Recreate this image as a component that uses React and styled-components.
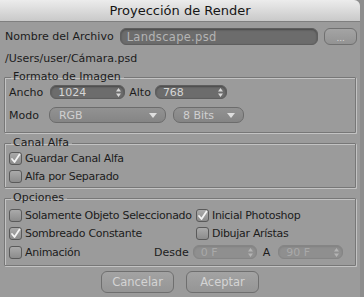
import React from "react";
import styled, { createGlobalStyle } from "styled-components";

const Global = createGlobalStyle`
  html, body { margin: 0; padding: 0; background: #8e8e8e; }
  body { font-family: "DejaVu Sans", "Liberation Sans", sans-serif; }
`;

const Window = styled.div`
  width: 360px;
  height: 297px;
  background: #9b9b9b;
  border-top-right-radius: 6px;
  overflow: hidden;
  font-size: 11px;
  color: #1c1c1c;
`;

const TitleBar = styled.div`
  height: 22px;
  background: linear-gradient(#ececec, #c9c9c9);
  border-bottom: 1px solid #7f7f7f;
  display: flex;
  align-items: center;
  justify-content: center;
  font-size: 13px;
  color: #151515;
  box-sizing: border-box;
`;

const Body = styled.div`
  padding: 6px 3px 0 5px;
`;

const Row = styled.div`
  display: flex;
  align-items: center;
  gap: ${p => p.gap ?? 4}px;
  height: ${p => p.h || 17}px;
`;

const Label = styled.span`
  white-space: nowrap;
  flex: none;
  margin-left: ${p => p.ml || 0}px;
  margin-right: ${p => p.mr || 0}px;
`;

const TextField = styled.div`
  width: ${p => p.w}px;
  height: 17px;
  box-sizing: border-box;
  border-radius: 6px;
  background: #6c6c6c;
  border: 1px solid #5e5e5e;
  box-shadow: inset 0 1px 2px rgba(0,0,0,0.35);
  color: #b4b4b4;
  padding-left: 6px;
  display: flex;
  align-items: center;
  font-size: 11.5px;
  letter-spacing: 0.3px;
`;

const DotsButton = styled.div`
  width: 33px;
  height: 17px;
  box-sizing: border-box;
  border-radius: 6px;
  border: 1px solid #707070;
  background: linear-gradient(#a4a4a4, #939393);
  color: #d8d8d8;
  display: flex;
  align-items: flex-end;
  justify-content: center;
  font-size: 9px;
  line-height: 11px;
  margin-left: auto;
`;

const PathLine = styled.div`
  height: 14px;
  margin-top: 6px;
  display: flex;
  align-items: center;
`;

const Group = styled.fieldset`
  margin: ${p => p.mt || 0}px 0 0 -1px;
  padding: ${p => p.pt || 0}px 4px ${p => p.pb || 3}px 4px;
  width: 352px;
  box-sizing: border-box;
  border: 1px solid #777;
  box-shadow: 1px 1px 0 #c3c3c3, inset 1px 1px 0 #c3c3c3;
  border-radius: 1px;
`;

const Legend = styled.legend`
  padding: 0 3px 0 2px;
  margin-left: 2px;
  font-size: 11px;
  line-height: 12px;
`;

const NumberField = styled.div`
  width: ${p => p.w}px;
  flex: none;
  height: 14px;
  box-sizing: border-box;
  border-radius: 6px;
  background: ${p => (p.disabled ? "#8f8f8f" : "#6c6c6c")};
  border: 1px solid ${p => (p.disabled ? "#858585" : "#5e5e5e")};
  box-shadow: inset 0 1px 2px rgba(0,0,0,${p => (p.disabled ? 0.1 : 0.35)});
  color: ${p => (p.disabled ? "#a9a9a9" : "#d6d6d6")};
  padding: 0 3px 0 7px;
  display: flex;
  align-items: center;
  justify-content: space-between;
  font-size: 11px;
`;

const Select = styled.div`
  width: ${p => p.w}px;
  height: 16px;
  box-sizing: border-box;
  border-radius: 7px;
  background: linear-gradient(#929292, #858585);
  border: 1px solid #6c6c6c;
  color: #d0d0d0;
  padding: 0 8px 0 9px;
  margin-left: ${p => p.ml || 0}px;
  display: flex;
  align-items: center;
  justify-content: space-between;
  font-size: 11px;
`;

const Check = styled.span`
  width: 13px;
  height: 13px;
  box-sizing: border-box;
  border-radius: 3px;
  border: 1px solid #5a5a5a;
  background: linear-gradient(#aaaaaa, #8c8c8c);
  display: inline-flex;
  align-items: center;
  justify-content: center;
  flex: none;
`;

const CheckItem = styled.label`
  display: flex;
  align-items: center;
  gap: 3px;
  flex: none;
  width: ${p => (p.w ? p.w + "px" : "auto")};
  white-space: nowrap;
  font-size: 11px;
  letter-spacing: -0.3px;
`;

const Footer = styled.div`
  display: flex;
  justify-content: center;
  gap: 12px;
  margin-top: 5px;
  margin-left: -2px;
`;

const Button = styled.div`
  width: 73px;
  height: 22px;
  box-sizing: border-box;
  border-radius: 6px;
  border: 1px solid #6f6f6f;
  background: linear-gradient(#a3a3a3, #959595);
  color: #d4d4d4;
  display: flex;
  align-items: center;
  justify-content: center;
  font-size: 11.5px;
`;

function Stepper({ color }) {
  return (
    <svg width="5" height="9" viewBox="0 0 5 9">
      <path d="M2.5 0 L5 3.5 L0 3.5 Z M2.5 9 L5 5.5 L0 5.5 Z" fill={color} />
    </svg>
  );
}

function Caret() {
  return (
    <svg width="8" height="5" viewBox="0 0 8 5">
      <path d="M0 0 L8 0 L4 5 Z" fill="#dedede" />
    </svg>
  );
}

function CheckBox({ checked, children, w }) {
  return (
    <CheckItem w={w}>
      <Check>
        {checked && (
          <svg width="11" height="11" viewBox="0 0 11 11">
            <path d="M2 6 L4.5 9 L9.5 1.5" stroke="#f4f4f4" strokeWidth="1.8" fill="none" strokeLinecap="round" strokeLinejoin="round" />
          </svg>
        )}
      </Check>
      {children}
    </CheckItem>
  );
}

export default function App() {
  return (
    <>
      <Global />
      <Window>
        <TitleBar>Proyección de Render</TitleBar>
        <Body>
          <Row gap={6}>
            <Label>Nombre del Archivo</Label>
            <TextField w={201}>Landscape.psd</TextField>
            <DotsButton>...</DotsButton>
          </Row>
          <PathLine>/Users/user/Cámara.psd</PathLine>

          <Group mt={6} pb={3}>
            <Legend>Formato de Imagen</Legend>
            <Row h={18}>
              <Label mr={3}>Ancho</Label>
              <NumberField w={75}>1024<Stepper color="#d8d8d8" /></NumberField>
              <Label>Alto</Label>
              <NumberField w={72}>768<Stepper color="#d8d8d8" /></NumberField>
            </Row>
            <Row h={28}>
              <Label mr={6}>Modo</Label>
              <Select w={117}>RGB<Caret /></Select>
              <Select w={71} ml={3}>8 Bits<Caret /></Select>
            </Row>
          </Group>

          <Group mt={4} pb={2}>
            <Legend>Canal Alfa</Legend>
            <Row h={18}><CheckBox checked>Guardar Canal Alfa</CheckBox></Row>
            <Row h={18}><CheckBox>Alfa por Separado</CheckBox></Row>
          </Group>

          <Group mt={4} pt={2} pb={3}>
            <Legend>Opciones</Legend>
            <Row h={18} gap={0}>
              <CheckBox w={187}>Solamente Objeto Seleccionado</CheckBox>
              <CheckBox checked>Inicial Photoshop</CheckBox>
            </Row>
            <Row h={18} gap={0}>
              <CheckBox checked w={187}>Sombreado Constante</CheckBox>
              <CheckBox>Dibujar Arístas</CheckBox>
            </Row>
            <Row h={20} gap={0}>
              <CheckBox w={145}>Animación</CheckBox>
              <Label mr={4}>Desde</Label>
              <NumberField w={64} disabled>0 F<Stepper color="#b4b4b4" /></NumberField>
              <Label ml={6} mr={8}>A</Label>
              <NumberField w={65} disabled>90 F<Stepper color="#b4b4b4" /></NumberField>
            </Row>
          </Group>

          <Footer>
            <Button>Cancelar</Button>
            <Button>Aceptar</Button>
          </Footer>
        </Body>
      </Window>
    </>
  );
}
